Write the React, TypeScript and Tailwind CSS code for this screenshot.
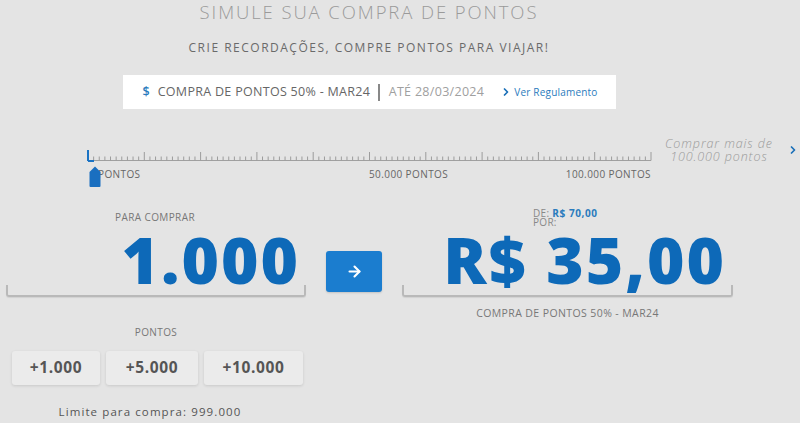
import { ChevronRight, ArrowRight } from 'lucide-react'

const ticks = Array.from({ length: 101 }, (_, i) => i)

function Ruler() {
  return (
    <svg width="566" height="13" viewBox="0 0 566 13" className="block">
      <line x1="1" y1="11.5" x2="564" y2="11.5" stroke="#a0a0a0" strokeWidth="1" />
      {ticks.map((i) => {
        const x = 1 + i * 5.63
        const major = i % 10 === 0
        if (i === 0) return null
        return (
          <line
            key={i}
            x1={x}
            x2={x}
            y1={major ? 3 : 7.5}
            y2={11.5}
            stroke="#9c9c9c"
            strokeWidth="1"
          />
        )
      })}
      <line x1="1" y1="1" x2="1" y2="12" stroke="#1a73c4" strokeWidth="2" />
      <line x1="1" y1="12" x2="7" y2="12" stroke="#1a73c4" strokeWidth="2" />
    </svg>
  )
}

function Bracket() {
  return (
    <div className="h-[12px] border-l-2 border-r-2 border-b-2 border-[#b9b9b9] rounded-b-[3px] shadow-[0_1px_1px_rgba(0,0,0,0.08)]" />
  )
}

export default function App() {
  return (
    <div
      className="w-[800px] h-[423px] overflow-hidden bg-[#e4e4e4] text-[#666]"
      style={{ fontFamily: '"Open Sans", "Liberation Sans", sans-serif' }}
    >
      <div className="w-[738px] flex flex-col items-center">
        <h1 className="h-[24px] leading-[24px] text-[18.5px] font-light tracking-[1.9px] text-[#9a9a9a]">
          SIMULE SUA COMPRA DE PONTOS
        </h1>
        <p className="mt-[16px] leading-[16px] text-[12px] font-medium tracking-[1.5px] text-[#6a6a6a]">
          CRIE RECORDAÇÕES, COMPRE PONTOS PARA VIAJAR!
        </p>
        <div className="mt-[19px] w-[493px] h-[34px] bg-white flex items-center pl-[20px] text-[12.5px]">
          <span className="text-[#2a7bbd] font-semibold">$</span>
          <span className="ml-[8px] tracking-[0.3px] text-[#666]">COMPRA DE PONTOS 50% - MAR24</span>
          <span className="ml-[8px] w-[1.5px] h-[17px] bg-[#888]" />
          <span className="ml-[9px] tracking-[0.3px] text-[#a0a0a0]">ATÉ 28/03/2024</span>
          <ChevronRight className="ml-[16px] w-[12px] h-[12px] text-[#1a6fb8]" strokeWidth={3.5} />
          <span className="ml-[2px] text-[10px] tracking-[0.2px] text-[#2a7bbd]">Ver Regulamento</span>
        </div>
      </div>

      <div className="mt-[28px] flex items-start pl-[87px]">
        <div className="relative w-[566px]">
          <div className="mt-[12px]">
            <Ruler />
          </div>
          <div className="mt-[6px] flex h-[12px] leading-[12px] text-[10px] tracking-[0.4px] text-[#666]">
            <div className="w-[282px] pl-[11px]">PONTOS</div>
            <div className="flex-1 flex justify-between pr-[2px]">
              <span>50.000 PONTOS</span>
              <span>100.000 PONTOS</span>
            </div>
          </div>
          <svg width="12" height="21" viewBox="0 0 12 21" className="absolute left-[2px] top-[29px]">
            <path d="M6 0.5 L11.5 6 L11.5 20 Q11.5 21 10.5 21 L1.5 21 Q0.5 21 0.5 20 L0.5 6 Z" fill="#1a6fc0" />
          </svg>
        </div>
        <div className="ml-[12px] leading-[13px] text-[12.5px] italic font-light tracking-[0.9px] text-[#9a9a9a] text-center">
          <div>Comprar mais de</div>
          <div>100.000 pontos</div>
        </div>
        <ChevronRight className="ml-[14px] mt-[7px] w-[12px] h-[12px] text-[#1a6fb8]" strokeWidth={3.5} />
      </div>

      <div className="mt-[29px] flex items-start">
        <div className="ml-[6px] w-[300px] flex flex-col">
          <div className="mt-[2px] pl-[109px] leading-[12px] text-[10px] tracking-[0.4px] text-[#777]">PARA COMPRAR</div>
          <div className="mt-[13px] pr-[6px] text-right leading-[48px] h-[48px] text-[64px] font-extrabold tracking-[2px] text-[#0d69b8]">
            1.000
          </div>
          <div className="mt-[1px]">
            <Bracket />
          </div>
          <div className="mt-[29px] text-center leading-[12px] text-[10px] tracking-[0.4px] text-[#777]">PONTOS</div>
          <div className="mt-[13px] flex gap-[6px] pl-[6px]">
            {[
              ['+1.000', 'w-[88px]'],
              ['+5.000', 'w-[92px]'],
              ['+10.000', 'w-[99px]'],
            ].map(([label, w]) => (
              <button
                key={label}
                className={`${w} h-[34px] rounded-[3px] bg-[#ebebeb] shadow-[0_1px_3px_rgba(0,0,0,0.12)] text-[15.5px] font-bold tracking-[0.6px] text-[#555]`}
              >
                {label}
              </button>
            ))}
          </div>
          <div className="mt-[20px] pr-[12px] leading-[14px] text-center text-[11.5px] tracking-[1.1px] text-[#555]">
            Limite para compra: 999.000
          </div>
        </div>

        <button className="ml-[20px] mt-[42px] w-[56px] h-[41px] rounded-[3px] bg-[#1b7dcf] flex items-center justify-center shadow-[0_1px_2px_rgba(0,0,0,0.15)]">
          <ArrowRight className="w-[17px] h-[17px] text-white" strokeWidth={3} />
        </button>

        <div className="ml-[20px] w-[331px] flex flex-col">
          <div className="pl-[131px] leading-[9px] text-[10px] tracking-[0.3px] text-[#888]">
            DE: <span className="font-bold text-[#2a7bbd] tracking-[0.6px]">R$ 70,00</span>
          </div>
          <div className="pl-[131px] leading-[9px] text-[10px] tracking-[0.3px] text-[#888]">POR:</div>
          <div className="mt-[9px] pr-[7px] text-right leading-[48px] h-[48px] text-[64px] font-extrabold tracking-[2px] text-[#0d69b8]">
            R$ 35,00
          </div>
          <div className="mt-[1px]">
            <Bracket />
          </div>
          <div className="mt-[10px] text-center leading-[12px] text-[10.5px] tracking-[0.4px] text-[#777]">
            COMPRA DE PONTOS 50% - MAR24
          </div>
        </div>
      </div>
    </div>
  )
}
